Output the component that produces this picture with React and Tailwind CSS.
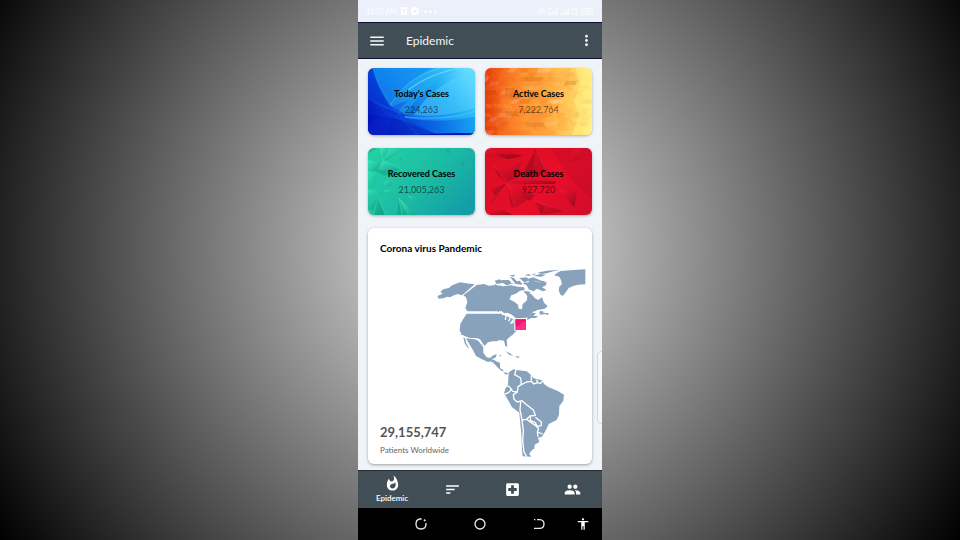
import {
  MdAccessibility,
  MdGroup,
  MdLocalHospital,
  MdMenu,
  MdMoreVert,
  MdSort,
  MdWhatshot,
} from "react-icons/md";

function BlueArt() {
  return (
    <svg viewBox="0 0 321 201" preserveAspectRatio="none" className="h-full w-full" aria-hidden="true">
      <defs>
        <linearGradient id="blueBase" x1="0" y1="0.7" x2="1" y2="0.2">
          <stop offset="0" stopColor="#0428d0" />
          <stop offset="0.35" stopColor="#0c78ea" />
          <stop offset="0.7" stopColor="#1eacf4" />
          <stop offset="1" stopColor="#62dcff" />
        </linearGradient>
        <linearGradient id="blueLow" x1="0" y1="0" x2="1" y2="0">
          <stop offset="0" stopColor="#0410b8" />
          <stop offset="0.6" stopColor="#0650e0" />
          <stop offset="1" stopColor="#129af0" />
        </linearGradient>
      </defs>
      <rect width="321" height="201" fill="url(#blueBase)" />
      <path d="M0 0H14Q26 60 72 124L0 90Z" fill="#0424cc" opacity=".55" />
      <path d="M14 0H196Q100 40 66 112Q30 60 14 0Z" fill="#148cf0" opacity=".6" />
      <path d="M66 112Q110 30 216 0H280Q160 50 116 140Z" fill="#2cb4f6" opacity=".4" />
      <path d="M140 142Q190 50 321 8V120Q240 148 140 142Z" fill="#5cd8ff" opacity=".4" />
      <path d="M0 90Q110 172 321 146V201H0Z" fill="url(#blueLow)" opacity=".65" />
      <path d="M110 144Q220 160 321 128V146Q220 168 110 150Z" fill="#30b8f6" opacity=".45" />
      <path d="M0 140Q110 146 210 201H0Z" fill="#0410ac" opacity=".4" />
      <path d="M0 176Q50 116 120 98Q70 140 60 201H0Z" fill="#0c30dc" opacity=".3" />
      <g fill="none" stroke="#7ce4ff">
        <path d="M66 112Q110 30 216 0" strokeWidth="2" opacity=".55" />
        <path d="M104 80Q170 20 276 0" strokeWidth="4" opacity=".6" />
        <path d="M140 142Q190 50 321 8" strokeWidth="1.5" opacity=".5" />
        <path d="M110 146Q220 160 321 130" strokeWidth="2" opacity=".5" />
        <path d="M14 0Q44 100 150 201" strokeWidth="1" opacity=".35" />
        <path d="M0 90Q100 180 240 198" strokeWidth="1" opacity=".25" />
      </g>
      <path d="M140 201Q240 192 321 196V201Z" fill="#0212b8" />
    </svg>
  );
}

const tints = ["#ffffff", "#e8641c", "#ff7a1a", "#ffd25a", "#c8500c", "#ffb340"];
const tiles = Array.from({ length: 180 }, (_, i) => {
  const row = Math.floor(i / 12);
  const seed = (i * 7919 + row * 104729 + i * i * 31) % 997;
  return {
    x: (i % 12) * 28 - 14 + (seed % 17),
    y: row * 13.4,
    w: 16 + (seed % 26),
    lean: seed % 2 ? 9 : -9,
    fill: tints[seed % 6],
    opacity: 0.04 + (seed % 5) * 0.04,
  };
});

function OrangeArt() {
  return (
    <svg viewBox="0 0 321 201" preserveAspectRatio="none" className="h-full w-full" aria-hidden="true">
      <defs>
        <linearGradient id="orangeBase">
          <stop offset="0" stopColor="#ea420c" />
          <stop offset="0.25" stopColor="#fc8028" />
          <stop offset="0.55" stopColor="#ffa43c" />
          <stop offset="0.82" stopColor="#ffd060" />
          <stop offset="1" stopColor="#fff080" />
        </linearGradient>
      </defs>
      <rect width="321" height="201" fill="url(#orangeBase)" />
      <path d="M0 0H50L30 60L44 100L28 150L40 201H0Z" fill="#e03208" opacity=".25" />
      <path d="M272 0H321V201H262L282 140L268 100L286 50Z" fill="#fff284" opacity=".6" />
      {tiles.map((t, i) => (
        <path
          key={i}
          d={`M${t.x} ${t.y}h${t.w}l${t.lean} 13.4h${-t.w}Z`}
          fill={t.fill}
          opacity={t.x > 240 ? t.opacity * 0.35 : t.opacity}
        />
      ))}
      <g fill="#c8600c" opacity=".3">
        <path d="M118 28h58l-8 12h-44Z M120 163h54l8 13h-56Z M244 38h34l-8 14h-34Z M60 60h30l-10 26h-20Z M60 130h36l6 14h-38Z" />
      </g>
    </svg>
  );
}

function GreenArt() {
  return (
    <svg viewBox="0 0 321 201" preserveAspectRatio="none" className="h-full w-full" aria-hidden="true">
      <defs>
        <linearGradient id="greenBase" x1="0" y1="0.2" x2="1" y2="0.8">
          <stop offset="0" stopColor="#22d0a4" />
          <stop offset="0.5" stopColor="#1cbca4" />
          <stop offset="1" stopColor="#149ca8" />
        </linearGradient>
        <linearGradient id="greenFacet" x1="0" y1="0" x2="1" y2="1">
          <stop offset="0" stopColor="#3ce8b8" />
          <stop offset="1" stopColor="#10a890" />
        </linearGradient>
      </defs>
      <rect width="321" height="201" fill="url(#greenBase)" />
      <g fill="url(#greenFacet)">
        <path d="M0 36L40 44L12 70L0 66Z" />
        <path d="M36 0L46 30L64 0Z" />
        <path d="M64 0L106 2L46 38Z" opacity=".8" />
        <path d="M46 38L98 64L22 68Z" />
        <path d="M0 70L30 76L14 122L0 100Z" opacity=".7" />
        <path d="M44 108L60 94L72 108L60 118Z" />
        <path d="M0 124L44 132L0 150Z" opacity=".8" />
        <path d="M30 146L0 184V201H52Z" opacity=".9" />
        <path d="M92 150L102 201H146Z" />
        <path d="M48 128L74 122L66 142Z" />
        <path d="M118 142L142 146L130 160Z" opacity=".6" />
      </g>
      <g fill="#0a8878" opacity=".35">
        <path d="M22 68L98 64L50 84Z M46 38L106 2L60 34Z M30 146L52 201L20 201Z M0 184L30 146L16 190Z M12 70L40 44L30 68Z M92 150L118 201H88Z M0 0H24L0 18Z" />
        <path d="M228 6L250 18L242 2Z M278 44L292 40L284 54Z M92 32L102 30L98 40Z M238 182L246 178L244 188Z" opacity=".7" />
      </g>
      <path d="M22 68L46 38L98 64M36 0L46 38M30 146L52 201M92 150L102 201" fill="none" stroke="#68f0cc" strokeWidth="1.5" opacity=".6" />
    </svg>
  );
}

function RedArt() {
  return (
    <svg viewBox="0 0 321 201" preserveAspectRatio="none" className="h-full w-full" aria-hidden="true">
      <defs>
        <linearGradient id="redBase" x1="0" y1="0.2" x2="1" y2="0.8">
          <stop offset="0" stopColor="#dc0c24" />
          <stop offset="0.6" stopColor="#e80e28" />
          <stop offset="1" stopColor="#d40c2a" />
        </linearGradient>
        <linearGradient id="redFacet" x1="0" y1="0" x2="1" y2="1">
          <stop offset="0" stopColor="#f41430" />
          <stop offset="1" stopColor="#9c081c" />
        </linearGradient>
      </defs>
      <rect width="321" height="201" fill="url(#redBase)" />
      <path d="M200 0L321 0V150Q240 90 200 0Z" fill="#b40a28" opacity=".3" />
      <g fill="url(#redFacet)">
        <path d="M154 0L102 76L140 90L184 76Z" opacity=".75" />
        <path d="M0 0L116 22L70 34L0 18Z" opacity=".7" />
        <path d="M24 50L66 66L110 40L96 90L66 104Z" opacity=".8" />
        <path d="M66 104L110 92L214 100L208 108L110 108Z" />
        <path d="M18 126L66 106L20 176Z" />
        <path d="M66 106L90 180L136 150Z" opacity=".75" />
        <path d="M66 106L148 140L136 160Z" opacity=".7" />
        <path d="M222 126L276 130L268 178Z" />
        <path d="M150 158L238 190L168 201Z" />
        <path d="M266 0H321L246 42Z" opacity=".8" />
        <path d="M10 201L40 180L84 201Z" />
      </g>
      <g fill="#780414" opacity=".3">
        <path d="M154 0L140 80L118 70Z M24 50L66 104L40 84Z M18 126L66 106L30 142Z M222 126L268 178L244 150Z M150 158L168 201L180 176Z M66 106L90 180L78 176Z M246 42L321 14L270 36Z M116 22L70 34L30 18Z" />
      </g>
      <path d="M24 50L66 104L96 90M66 106L20 176M66 106L90 180M154 0L184 76M150 158L238 190" fill="none" stroke="#ff3c50" strokeWidth="1.5" opacity=".5" />
    </svg>
  );
}

function AmericasMap() {
  return (
    <svg viewBox="228 144 450 570" className="h-[190px] w-[150px]" role="img" aria-label="Map of the Americas">
      <defs>
        <filter id="coast" x="0" y="0" width="1" height="1">
          <feTurbulence type="fractalNoise" baseFrequency="0.3" numOctaves="2" seed="4" />
          <feDisplacementMap in="SourceGraphic" scale="5" xChannelSelector="R" yChannelSelector="G" />
        </filter>
      </defs>
      <g fill="#88a2bc" filter="url(#coast)">
        <path d="M232 228L248 221L241 215L250 208L268 203L276 196L300 187L318 190L344 193L310 223L304 226L294 222L282 226L270 232L262 230L250 235L236 236Z" />
        <path d="M350 195L372 192L386 197L408 195L430 199L452 196L474 200L492 202L494 210L480 212L466 222L454 226L448 238L464 246L474 254L476 266L486 268L488 252L500 242L502 230L498 220L514 222L524 234L534 240L546 232L552 248L563 258L554 266L532 270L514 280L500 293L468 295L456 286L446 282L432 280L426 274L322 274L316 264L322 246L318 232L310 226Z" />
        <path d="M404 182L420 178L430 188L410 192Z M424 180L446 180L458 190L440 196L430 190Z M450 170L462 174L470 184L480 182L486 194L466 192Z M478 174L500 172L508 180L494 188Z M488 190L508 186L520 182L540 188L560 186L558 196L546 202L560 210L548 214L532 206L520 214L506 208L500 196Z M500 178L520 172L544 182L556 184L548 190L524 182L508 186Z M520 168L540 162L558 164L544 170Z M532 158L560 152L600 149L580 154L560 160L544 162Z M448 166L466 164L460 170Z M492 166L508 162L512 168Z M406 192L412 198L402 196Z M492 212L512 216L506 224L494 220Z M512 164L528 160L524 164Z" />
        <path d="M676 148V193L654 194L640 198L626 204L618 216L608 228L600 222L596 210L598 200L606 192L602 178L598 170L582 166L592 158L602 153L640 150Z" />
        <path d="M502 290L516 278L528 280L520 288L534 288L528 294L514 294L502 300Z M538 276L548 272L550 278L566 280L564 286L556 282L540 284Z" />
        <path d="M320 281H426L432 286L444 290L456 294L466 298L470 296L498 297L492 306L480 320L466 336L458 344L448 352L440 360L442 380L436 378L432 362L418 360L410 364L398 364L384 367L374 378L368 370L360 358L348 354L330 354L316 349L306 344L299 332L301 312L310 296Z" />
        <path d="M318 355L334 357L346 358L356 364L364 374L370 382L370 398L380 412L390 414L400 406L410 403L408 412L398 416L394 424L384 426L366 418L348 408L340 392L330 376Z" />
        <path d="M310 352L316 356L318 368L328 386L322 382L314 370Z" />
        <path d="M392 424L400 418L408 424L420 428L420 444L432 452L426 454L412 442L406 434Z M430 456L446 460L438 464Z M436 394L450 400L460 408L448 404Z M464 408L480 410L474 414Z M418 404L424 406L420 410Z" />
        <path d="M446 458L460 448L470 450L500 454L514 466L520 474L530 478L546 480L552 492L566 502L592 512L612 524L610 542L598 558L597 584L590 600L566 612L558 630L546 650L534 653L538 666L524 674L523 686L514 690L508 702L514 710L488 709L486 690L484 640L480 600L478 578L456 562L444 540L432 520L436 506L444 494Z" />
      </g>
      <g fill="none" stroke="#fff" strokeWidth="4" strokeLinejoin="round">
        <path d="M468 450L464 464L482 474L484 494L474 500L472 516L458 514L448 500L438 496" />
        <path d="M484 494L500 486L514 484L514 466M514 484L522 492L532 488L530 480M532 488L542 490L548 482" />
        <path d="M434 522L446 518L456 506M472 516L460 524L462 538L472 546L486 542L500 554L520 570L526 586L510 588L500 598L486 600L480 570L482 546" />
        <path d="M510 588L512 602L526 608L532 620L544 616L544 606L526 592M500 598L526 616L536 626L532 636L534 650M532 636L548 642" />
        <path d="M486 600L490 632L488 664L492 696L500 710" />
      </g>
      <path d="M426 284L442 280L454 286L460 292M436 300L438 288M446 304L452 290L462 298L452 310L462 306" fill="none" stroke="#fff" strokeWidth="4" />
      <rect x="463" y="295" width="37" height="37" fill="#fff" />
      <rect x="466" y="298" width="32" height="32" fill="#ff2d84" />
      <path d="M466 298H498V304L484 308L480 316L468 320Z" fill="#f01472" />
    </svg>
  );
}

const stats = [
  { label: "Today's Cases", value: "224,263", Art: BlueArt },
  { label: "Active Cases", value: "7,222,764", Art: OrangeArt },
  { label: "Recovered Cases", value: "21,005,263", Art: GreenArt },
  { label: "Death Cases", value: "927,720", Art: RedArt },
];

function StatusBar() {
  return (
    <div className="flex h-[22px] items-center justify-between bg-[#ebf0fa] px-2 text-white">
      <div className="flex items-center gap-[3px]">
        <span className="text-[7px] leading-none">12:10 AM</span>
        <svg viewBox="0 0 24 24" className="h-2 w-2" aria-hidden="true">
          <path d="M1 1H23V7H1ZM3 8H21V23H3Z" fill="#fff" />
          <path d="M8 11H16M12 11V18" stroke="#dfe5f2" strokeWidth="2" />
        </svg>
        <svg viewBox="0 0 24 24" className="h-2 w-2" aria-hidden="true">
          <circle cx="12" cy="12" r="12" fill="#fff" />
          <path d="M5 15L10 9L14 13L19 9L14 16L10 12Z" fill="#d5dcea" />
        </svg>
        <svg viewBox="0 0 39 9" className="ml-0.5 h-[3px] w-[13px]" fill="#fff" aria-hidden="true">
          <circle cx="5" cy="5" r="4" />
          <circle cx="20" cy="5" r="4" />
          <circle cx="34" cy="5" r="4" />
        </svg>
      </div>
      <svg viewBox="0 0 171 27" className="h-[9px] w-[57px]" fill="none" stroke="#fff" strokeWidth="2" aria-hidden="true">
        <path d="M6 22A11 11 0 1 1 20 22M9 18A6 6 0 1 1 17 18" />
        <circle cx="13" cy="14" r="2" fill="#fff" />
        <path d="M34 3H46M34 7H42M36 12V24M42 16V24M48 12V24M54 8V24M60 3V24" strokeWidth="3" />
        <path d="M70 21V24M76 17V24M82 13V24M88 8V24M94 3V24" strokeWidth="3" />
        <path d="M104 3H109V7H104V11H110M114 3H120V11H114ZM104 15V24M110 15L105 19L110 24M120 17H115V20H120V24H114" />
        <rect x="133" y="5" width="34" height="17" rx="5" />
        <path d="M129 11V17M140 9V19M146 9H151V18H146ZM156 9H161V18H156Z" />
      </svg>
    </div>
  );
}

function Header() {
  return (
    <header className="flex h-[37px] items-center border-y border-[#0c1030] bg-[#424e56] pr-[7px] pl-[10px] text-[#f4f6f7]">
      <button type="button" aria-label="Open menu">
        <MdMenu size={18} />
      </button>
      <h1 className="ml-5 flex-1 text-xs font-normal">Epidemic</h1>
      <button type="button" aria-label="More options">
        <MdMoreVert size={17} />
      </button>
    </header>
  );
}

function StatCard({ label, value, Art }) {
  return (
    <article className="grid h-[67px] overflow-hidden rounded-md shadow-[0_1px_3px_rgba(0,0,0,0.3)]">
      <div className="col-start-1 row-start-1 h-[67px]">
        <Art />
      </div>
      <div className="z-10 col-start-1 row-start-1 flex flex-col items-center justify-center pt-px leading-4">
        <h2 className="text-[9px] font-bold text-black">{label}</h2>
        <p className="text-[9px] text-black/60">{value}</p>
      </div>
    </article>
  );
}

function Tabs() {
  return (
    <nav className="grid h-[38px] grid-cols-4 border-t border-[#23303c] bg-[#424e56] pl-1 text-white">
      <button type="button" className="flex flex-col items-center justify-center">
        <MdWhatshot size={17} />
        <span className="text-[8px] leading-3 font-semibold">Epidemic</span>
      </button>
      <button type="button" aria-label="Ranking" className="flex items-center justify-center">
        <MdSort size={17} />
      </button>
      <button type="button" aria-label="Hospitals" className="flex items-center justify-center">
        <MdLocalHospital size={17} />
      </button>
      <button type="button" aria-label="People" className="flex items-center justify-center">
        <MdGroup size={17} />
      </button>
    </nav>
  );
}

function SystemNav() {
  return (
    <div className="flex h-8 items-center bg-black pr-1 pl-[34px] text-[#e8e8e8]">
      <button type="button" aria-label="Recent apps" className="flex w-[58px] justify-center">
        <svg viewBox="0 0 36 36" className="h-3 w-3" fill="none" stroke="currentColor" strokeWidth="4">
          <path d="M20 3H14Q3 5 3 18Q3 33 18 33Q33 33 33 18V15" />
          <path d="M27 5L31 9" strokeWidth="5" />
        </svg>
      </button>
      <button type="button" aria-label="Home" className="flex w-[60px] justify-center">
        <svg viewBox="0 0 36 36" className="h-3 w-3" fill="none" stroke="currentColor" strokeWidth="4">
          <circle cx="18" cy="18" r="15" />
        </svg>
      </button>
      <button type="button" aria-label="Back" className="flex w-[58px] justify-center">
        <svg viewBox="0 0 36 36" className="h-3 w-3" fill="none" stroke="currentColor" strokeWidth="4">
          <path d="M12 5H20Q33 6 33 18Q33 31 20 31H3" />
          <path d="M3 5H7" />
        </svg>
      </button>
      <button type="button" aria-label="Accessibility" className="flex flex-1 justify-center text-white">
        <MdAccessibility size={14} />
      </button>
    </div>
  );
}

export default function App() {
  return (
    <div className="flex min-h-screen justify-center bg-[radial-gradient(circle_at_50%_46%,#e8e8e8,#000)] font-[Lato,sans-serif]">
      <div className="relative flex w-full max-w-[244px] flex-col overflow-hidden bg-[#f0f4f8]">
        <StatusBar />
        <Header />
        <main className="flex flex-1 flex-col gap-[13px] px-[10px] pt-[9px] pb-1.5">
          <section className="grid grid-cols-2 gap-x-[10px] gap-y-[13px]">
            {stats.map((s) => (
              <StatCard key={s.label} {...s} />
            ))}
          </section>
          <section className="flex flex-1 flex-col rounded-md bg-white pt-3 pr-1.5 pb-1.5 pl-3 shadow-[0_1px_3px_rgba(0,0,0,0.35)]">
            <h2 className="text-[10px] leading-4 font-bold text-black">Corona virus Pandemic</h2>
            <div className="mt-3 grid flex-1">
              <div className="col-start-1 row-start-1 justify-self-end">
                <AmericasMap />
              </div>
              <div className="col-start-1 row-start-1 flex flex-col self-end justify-self-start">
                <p className="text-[13px] leading-5 font-bold text-[#555]">29,155,747</p>
                <p className="text-[8px] leading-4 text-[#666]">Patients Worldwide</p>
              </div>
            </div>
          </section>
        </main>
        <Tabs />
        <SystemNav />
        <div className="absolute top-[351px] right-0 h-[73px] w-[5px] rounded-l-md border border-r-0 border-[#d4d8dc] bg-[#f6f8fa]" />
      </div>
    </div>
  );
}
